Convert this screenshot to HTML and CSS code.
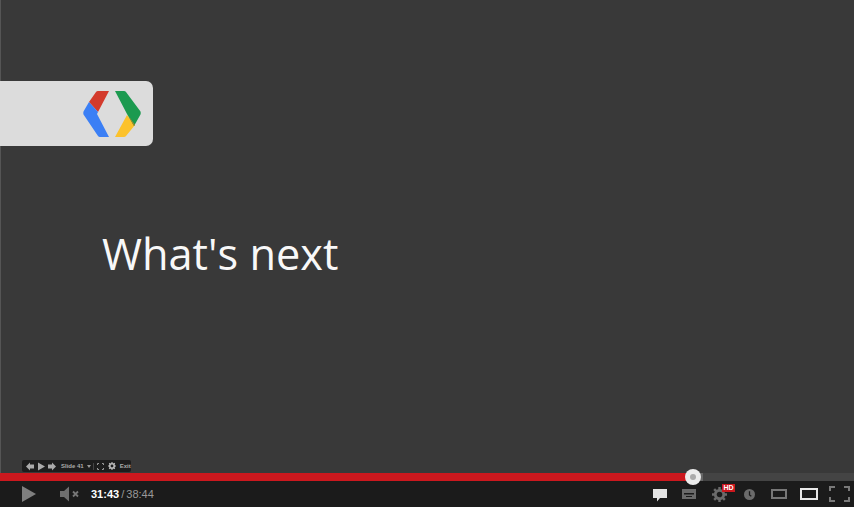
FILE: index.html
```html
<!DOCTYPE html>
<html lang="en">
  <head>
    <meta charset="UTF-8" />
    <title>What's next</title>
    <link rel="stylesheet" href="styles.css">
  </head>
  <body>
    <div class="player">
      <div class="slide">
        <div class="logoCard">
          <svg class="logo" width="58" height="46" viewBox="0 0 58 46">
            <path fill="#d33a2c" d="M13 1 Q13.600 0 15 0 L26 0 L15 21 L6 11 Z" />
            <path fill="#3b7ff5" d="M6 11 L0.500 20.500 Q0 22 0.500 23.500 L15 45 Q15.700 46 17 46 L26 46 L14 23 L15 21 Z" />
            <path fill="#fcc22c" d="M44 24 L52 34 L43 45 Q42.300 46 41 46 L32 46 Z" />
            <path fill="#1c9a50" d="M32 0 L41 0 Q42.300 0 43 1 L57.500 20.500 Q58 22 57.500 23.500 L51 35 L44 23 Z" />
            <path fill="#a98a2a" d="M44 24 L46 26 L51 35 L52 34 L47 27 Z" />
          </svg>
        </div>
        <h1 class="title">What's next</h1>
        <div class="slideBar">
          <svg class="slideArrows" width="31" height="9" viewBox="0 0 31 9">
            <path fill="#aaa" d="M0 4.500 L4 0.500 V2.500 H8 V6.500 H4 V8.500 Z" />
            <path fill="#aaa" d="M12 0.500 L19 4.500 L12 8.500 Z" />
            <path fill="#aaa" d="M30 4.500 L26 0.500 V2.500 H22 V6.500 H26 V8.500 Z" />
          </svg>
          <span class="slideNum">Slide 41</span>
          <span class="slideCaret"></span>
          <span class="slideSep"></span>
          <svg class="slideFull" width="7" height="7" viewBox="0 0 7 7">
            <path fill="none" stroke="#999" d="M0.500 2 V0.500 H2 M5 0.500 H6.500 V2 M6.500 5 V6.500 H5 M2 6.500 H0.500 V5" />
          </svg>
          <svg class="slideGear" width="8" height="8" viewBox="0 0 10 10">
            <circle cx="5" cy="5" r="2.800" fill="none" stroke="#bbb" stroke-width="2" />
            <path stroke="#bbb" stroke-width="1.400" d="M5 0 V2 M5 8 V10 M0 5 H2 M8 5 H10 M1.500 1.500 L3 3 M7 7 L8.500 8.500 M8.500 1.500 L7 3 M3 7 L1.500 8.500" />
          </svg>
          <span class="slideExit">Exit</span>
        </div>
      </div>
      <div class="progress">
        <div class="played"></div>
        <div class="loaded"></div>
        <div class="handle"><span></span></div>
      </div>
      <div class="controls">
        <svg class="playBtn" width="14" height="16" viewBox="0 0 14 16">
          <path fill="#7f7f7f" d="M0 0 L14 8 L0 16 Z" />
        </svg>
        <svg class="volBtn" width="20" height="16" viewBox="0 0 20 16">
          <path fill="#6f6f6f" d="M0 5 H4 L9 0.500 V15.500 L4 11 H0 Z" />
          <path stroke="#777" stroke-width="1.800" d="M13 5.500 L18 10.500 M18 5.500 L13 10.500" />
        </svg>
        <div class="time"><b>31:43</b> / 38:44</div>
        <div class="spacer"></div>
        <svg class="chatIcon" width="14" height="13" viewBox="0 0 14 13">
          <path fill="#e4e4e4" d="M0 0 H14 V9 H7 L4 12.500 V9 H0 Z" />
        </svg>
        <svg class="captionIcon" width="14" height="10" viewBox="0 0 14 10">
          <path fill="#6b6b6b" fill-rule="evenodd" d="M0 0 H14 V10 H0 Z M2 4 V5.500 H12 V4 Z M4 7 V8 H10 V7 Z" />
        </svg>
        <div class="gearWrap">
          <svg width="15" height="15" viewBox="0 0 16 16">
            <circle cx="8" cy="8" r="4.500" fill="none" stroke="#6b6b6b" stroke-width="3" />
            <path stroke="#6b6b6b" stroke-width="2.600" d="M8 0 V3 M8 13 V16 M0 8 H3 M13 8 H16 M2.300 2.300 L4.500 4.500 M11.500 11.500 L13.700 13.700 M13.700 2.300 L11.500 4.500 M4.500 11.500 L2.300 13.700" />
          </svg>
          <span class="hdBadge">HD</span>
        </div>
        <svg class="clockIcon" width="11" height="11" viewBox="0 0 12 12">
          <circle cx="6" cy="6" r="6" fill="#6b6b6b" />
          <path fill="none" stroke="#1b1b1b" stroke-width="1.400" d="M6 2.500 V6.500 L8 8" />
        </svg>
        <div class="sizeBtn small"></div>
        <div class="sizeBtn large"></div>
        <svg class="fullIcon" width="21" height="16" viewBox="0 0 21 16">
          <path fill="none" stroke="#7a7a7a" stroke-width="2" d="M1 5 V1 H6 M15 1 H20 V5 M20 11 V15 H15 M6 15 H1 V11" />
        </svg>
      </div>
    </div>
  </body>
</html>
```

FILE: styles.css
```css
html,
body {
  margin: 0;
  height: 100%;
  background: #1b1b1b;
  overflow: hidden;
}
.player {
  display: flex;
  flex-direction: column;
  width: 854px;
  height: 507px;
  font-family: "Liberation Sans", Arial, sans-serif;
}
.slide {
  position: relative;
  flex: 1;
  background: #393939;
  border-left: 1px solid #555;
}
.logoCard {
  display: flex;
  align-items: center;
  justify-content: flex-end;
  box-sizing: border-box;
  width: 153px;
  height: 65px;
  margin: 81px 0 0 -1px;
  padding-right: 12px;
  background: #dcdcdc;
  border-radius: 0 7px 7px 0;
}
.title {
  margin: 78px 0 0 101px;
  color: #f8f8f8;
  font-family: "Open Sans", sans-serif;
  font-size: 43.3px;
  font-weight: 400;
  line-height: 60px;
}
.slideBar {
  position: absolute;
  left: 21px;
  bottom: 1px;
  display: flex;
  align-items: center;
  box-sizing: border-box;
  width: 109px;
  height: 12px;
  padding-left: 4px;
  background: #1d1d1d;
  border-radius: 2px;
  font-size: 6px;
  font-weight: 700;
  color: #aaa;
  white-space: nowrap;
}
.slideArrows {
  flex: none;
}
.slideNum {
  margin-left: 4px;
}
.slideCaret {
  margin: 3px 0 0 3px;
  border: 2px solid transparent;
  border-top: 3px solid #999;
}
.slideSep {
  width: 1px;
  height: 7px;
  margin-left: 2px;
  background: #444;
}
.slideFull {
  margin-left: 3px;
}
.slideGear {
  margin-left: 4px;
}
.slideExit {
  margin-left: 4px;
}
.progress {
  position: relative;
  display: flex;
  height: 8px;
  background: #444;
}
.played {
  width: 693px;
  background: #cc181e;
}
.loaded {
  width: 10px;
  background: #666;
}
.handle {
  position: absolute;
  left: 685px;
  top: -4px;
  display: flex;
  align-items: center;
  justify-content: center;
  width: 16px;
  height: 16px;
  background: #ececec;
  border-radius: 50%;
}
.handle span {
  width: 6px;
  height: 6px;
  background: #aaa;
  border-radius: 50%;
}
.controls {
  display: flex;
  align-items: center;
  height: 26px;
  padding: 0 4px 0 22px;
  background: #1b1b1b;
}
.volBtn {
  margin-left: 24px;
}
.time {
  margin-left: 11px;
  color: #999;
  font-size: 11px;
  word-spacing: -1px;
}
.time b {
  color: #fff;
}
.spacer {
  flex: 1;
}
.chatIcon {
  margin-top: 2px;
}
.captionIcon {
  margin-left: 15px;
}
.gearWrap {
  position: relative;
  display: flex;
  margin-left: 16px;
}
.hdBadge {
  position: absolute;
  top: -3px;
  left: 10px;
  padding: 0 1.500px;
  background: #cc181e;
  color: #fff;
  font-size: 7px;
  font-weight: 700;
  line-height: 8px;
}
.clockIcon {
  margin-left: 17px;
}
.sizeBtn {
  box-sizing: border-box;
  border: 2px solid #777;
}
.sizeBtn.small {
  width: 16px;
  height: 10px;
  margin-left: 16px;
}
.sizeBtn.large {
  width: 18px;
  height: 12px;
  margin-left: 13px;
  border-color: #e8e8e8;
}
.fullIcon {
  margin-left: 11px;
}
```
